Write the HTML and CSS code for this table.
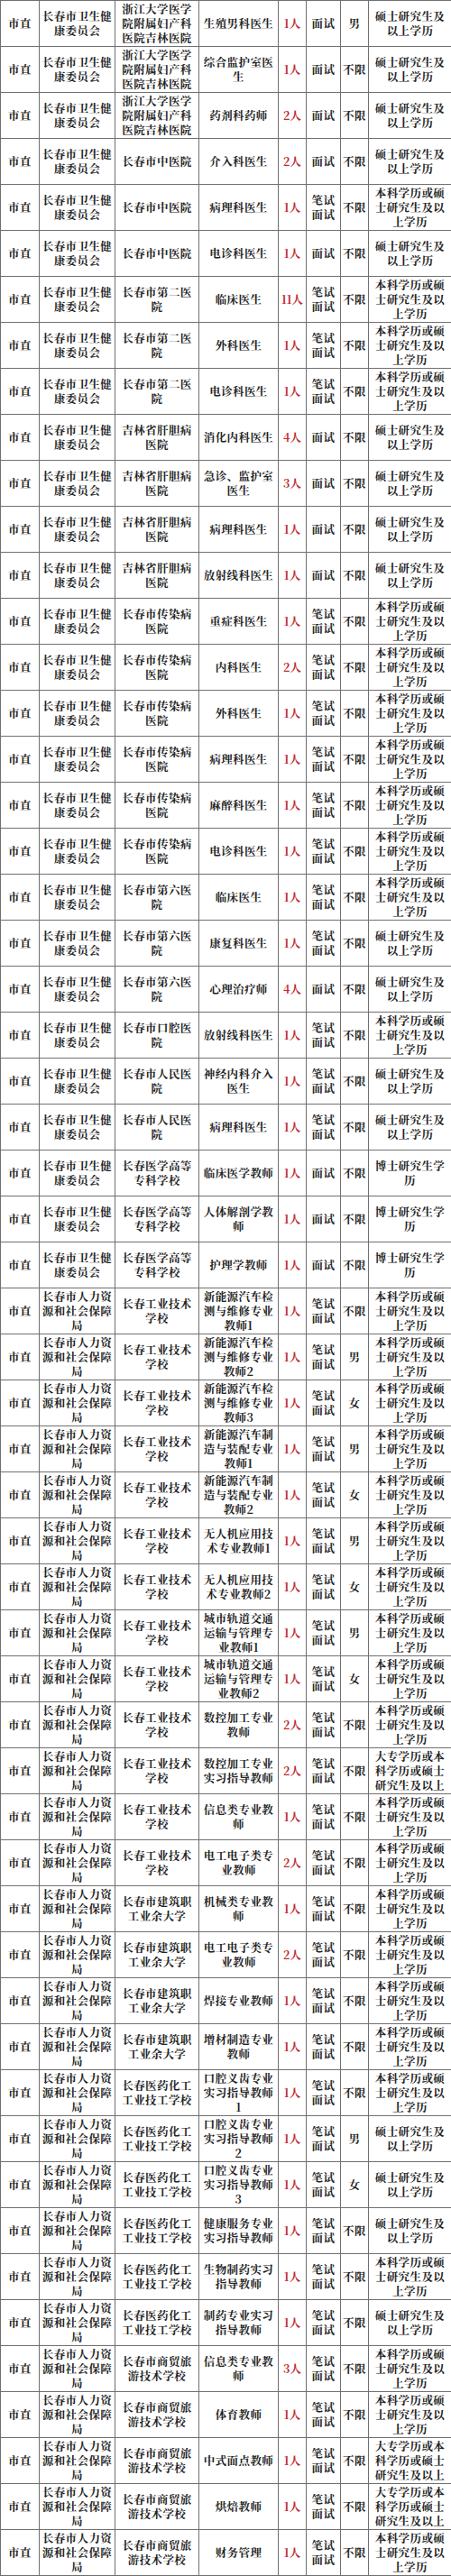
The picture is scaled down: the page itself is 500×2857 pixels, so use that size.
FILE: index.html
```html
<!DOCTYPE html>
<html lang="zh-CN">
<head>
<meta charset="utf-8">
<title>岗位表</title>
<link rel="stylesheet" href="styles.css">
</head>
<body>
<table class="sheet">
<colgroup>
<col class="c1"><col class="c2"><col class="c3"><col class="c4"><col class="c5"><col class="c6"><col class="c7"><col class="c8">
</colgroup>
<tbody>
<tr><td>市直</td><td>长春市卫生健<br>康委员会</td><td>浙江大学医学<br>院附属妇产科<br>医院吉林医院</td><td>生殖男科医生</td><td class="n">1人</td><td>面试</td><td>男</td><td>硕士研究生及<br>以上学历</td></tr>
<tr><td>市直</td><td>长春市卫生健<br>康委员会</td><td>浙江大学医学<br>院附属妇产科<br>医院吉林医院</td><td>综合监护室医<br>生</td><td class="n">1人</td><td>面试</td><td>不限</td><td>硕士研究生及<br>以上学历</td></tr>
<tr><td>市直</td><td>长春市卫生健<br>康委员会</td><td>浙江大学医学<br>院附属妇产科<br>医院吉林医院</td><td>药剂科药师</td><td class="n">2人</td><td>面试</td><td>不限</td><td>硕士研究生及<br>以上学历</td></tr>
<tr><td>市直</td><td>长春市卫生健<br>康委员会</td><td>长春市中医院</td><td>介入科医生</td><td class="n">2人</td><td>面试</td><td>不限</td><td>硕士研究生及<br>以上学历</td></tr>
<tr><td>市直</td><td>长春市卫生健<br>康委员会</td><td>长春市中医院</td><td>病理科医生</td><td class="n">1人</td><td>笔试<br>面试</td><td>不限</td><td>本科学历或硕<br>士研究生及以<br>上学历</td></tr>
<tr><td>市直</td><td>长春市卫生健<br>康委员会</td><td>长春市中医院</td><td>电诊科医生</td><td class="n">1人</td><td>面试</td><td>不限</td><td>硕士研究生及<br>以上学历</td></tr>
<tr><td>市直</td><td>长春市卫生健<br>康委员会</td><td>长春市第二医<br>院</td><td>临床医生</td><td class="n">11人</td><td>笔试<br>面试</td><td>不限</td><td>本科学历或硕<br>士研究生及以<br>上学历</td></tr>
<tr><td>市直</td><td>长春市卫生健<br>康委员会</td><td>长春市第二医<br>院</td><td>外科医生</td><td class="n">1人</td><td>笔试<br>面试</td><td>不限</td><td>本科学历或硕<br>士研究生及以<br>上学历</td></tr>
<tr><td>市直</td><td>长春市卫生健<br>康委员会</td><td>长春市第二医<br>院</td><td>电诊科医生</td><td class="n">1人</td><td>笔试<br>面试</td><td>不限</td><td>本科学历或硕<br>士研究生及以<br>上学历</td></tr>
<tr><td>市直</td><td>长春市卫生健<br>康委员会</td><td>吉林省肝胆病<br>医院</td><td>消化内科医生</td><td class="n">4人</td><td>面试</td><td>不限</td><td>硕士研究生及<br>以上学历</td></tr>
<tr><td>市直</td><td>长春市卫生健<br>康委员会</td><td>吉林省肝胆病<br>医院</td><td>急诊、监护室<br>医生</td><td class="n">3人</td><td>面试</td><td>不限</td><td>硕士研究生及<br>以上学历</td></tr>
<tr><td>市直</td><td>长春市卫生健<br>康委员会</td><td>吉林省肝胆病<br>医院</td><td>病理科医生</td><td class="n">1人</td><td>面试</td><td>不限</td><td>硕士研究生及<br>以上学历</td></tr>
<tr><td>市直</td><td>长春市卫生健<br>康委员会</td><td>吉林省肝胆病<br>医院</td><td>放射线科医生</td><td class="n">1人</td><td>面试</td><td>不限</td><td>硕士研究生及<br>以上学历</td></tr>
<tr><td>市直</td><td>长春市卫生健<br>康委员会</td><td>长春市传染病<br>医院</td><td>重症科医生</td><td class="n">1人</td><td>笔试<br>面试</td><td>不限</td><td>本科学历或硕<br>士研究生及以<br>上学历</td></tr>
<tr><td>市直</td><td>长春市卫生健<br>康委员会</td><td>长春市传染病<br>医院</td><td>内科医生</td><td class="n">2人</td><td>笔试<br>面试</td><td>不限</td><td>本科学历或硕<br>士研究生及以<br>上学历</td></tr>
<tr><td>市直</td><td>长春市卫生健<br>康委员会</td><td>长春市传染病<br>医院</td><td>外科医生</td><td class="n">1人</td><td>笔试<br>面试</td><td>不限</td><td>本科学历或硕<br>士研究生及以<br>上学历</td></tr>
<tr><td>市直</td><td>长春市卫生健<br>康委员会</td><td>长春市传染病<br>医院</td><td>病理科医生</td><td class="n">1人</td><td>笔试<br>面试</td><td>不限</td><td>本科学历或硕<br>士研究生及以<br>上学历</td></tr>
<tr><td>市直</td><td>长春市卫生健<br>康委员会</td><td>长春市传染病<br>医院</td><td>麻醉科医生</td><td class="n">1人</td><td>笔试<br>面试</td><td>不限</td><td>本科学历或硕<br>士研究生及以<br>上学历</td></tr>
<tr><td>市直</td><td>长春市卫生健<br>康委员会</td><td>长春市传染病<br>医院</td><td>电诊科医生</td><td class="n">1人</td><td>笔试<br>面试</td><td>不限</td><td>本科学历或硕<br>士研究生及以<br>上学历</td></tr>
<tr><td>市直</td><td>长春市卫生健<br>康委员会</td><td>长春市第六医<br>院</td><td>临床医生</td><td class="n">1人</td><td>笔试<br>面试</td><td>不限</td><td>本科学历或硕<br>士研究生及以<br>上学历</td></tr>
<tr><td>市直</td><td>长春市卫生健<br>康委员会</td><td>长春市第六医<br>院</td><td>康复科医生</td><td class="n">1人</td><td>笔试<br>面试</td><td>不限</td><td>硕士研究生及<br>以上学历</td></tr>
<tr><td>市直</td><td>长春市卫生健<br>康委员会</td><td>长春市第六医<br>院</td><td>心理治疗师</td><td class="n">4人</td><td>面试</td><td>不限</td><td>硕士研究生及<br>以上学历</td></tr>
<tr><td>市直</td><td>长春市卫生健<br>康委员会</td><td>长春市口腔医<br>院</td><td>放射线科医生</td><td class="n">1人</td><td>笔试<br>面试</td><td>不限</td><td>本科学历或硕<br>士研究生及以<br>上学历</td></tr>
<tr><td>市直</td><td>长春市卫生健<br>康委员会</td><td>长春市人民医<br>院</td><td>神经内科介入<br>医生</td><td class="n">1人</td><td>笔试<br>面试</td><td>不限</td><td>硕士研究生及<br>以上学历</td></tr>
<tr><td>市直</td><td>长春市卫生健<br>康委员会</td><td>长春市人民医<br>院</td><td>病理科医生</td><td class="n">1人</td><td>笔试<br>面试</td><td>不限</td><td>硕士研究生及<br>以上学历</td></tr>
<tr><td>市直</td><td>长春市卫生健<br>康委员会</td><td>长春医学高等<br>专科学校</td><td>临床医学教师</td><td class="n">1人</td><td>面试</td><td>不限</td><td>博士研究生学<br>历</td></tr>
<tr><td>市直</td><td>长春市卫生健<br>康委员会</td><td>长春医学高等<br>专科学校</td><td>人体解剖学教<br>师</td><td class="n">1人</td><td>面试</td><td>不限</td><td>博士研究生学<br>历</td></tr>
<tr><td>市直</td><td>长春市卫生健<br>康委员会</td><td>长春医学高等<br>专科学校</td><td>护理学教师</td><td class="n">1人</td><td>面试</td><td>不限</td><td>博士研究生学<br>历</td></tr>
<tr><td>市直</td><td>长春市人力资<br>源和社会保障<br>局</td><td>长春工业技术<br>学校</td><td>新能源汽车检<br>测与维修专业<br>教师1</td><td class="n">1人</td><td>笔试<br>面试</td><td>不限</td><td>本科学历或硕<br>士研究生及以<br>上学历</td></tr>
<tr><td>市直</td><td>长春市人力资<br>源和社会保障<br>局</td><td>长春工业技术<br>学校</td><td>新能源汽车检<br>测与维修专业<br>教师2</td><td class="n">1人</td><td>笔试<br>面试</td><td>男</td><td>本科学历或硕<br>士研究生及以<br>上学历</td></tr>
<tr><td>市直</td><td>长春市人力资<br>源和社会保障<br>局</td><td>长春工业技术<br>学校</td><td>新能源汽车检<br>测与维修专业<br>教师3</td><td class="n">1人</td><td>笔试<br>面试</td><td>女</td><td>本科学历或硕<br>士研究生及以<br>上学历</td></tr>
<tr><td>市直</td><td>长春市人力资<br>源和社会保障<br>局</td><td>长春工业技术<br>学校</td><td>新能源汽车制<br>造与装配专业<br>教师1</td><td class="n">1人</td><td>笔试<br>面试</td><td>男</td><td>本科学历或硕<br>士研究生及以<br>上学历</td></tr>
<tr><td>市直</td><td>长春市人力资<br>源和社会保障<br>局</td><td>长春工业技术<br>学校</td><td>新能源汽车制<br>造与装配专业<br>教师2</td><td class="n">1人</td><td>笔试<br>面试</td><td>女</td><td>本科学历或硕<br>士研究生及以<br>上学历</td></tr>
<tr><td>市直</td><td>长春市人力资<br>源和社会保障<br>局</td><td>长春工业技术<br>学校</td><td>无人机应用技<br>术专业教师1</td><td class="n">1人</td><td>笔试<br>面试</td><td>男</td><td>本科学历或硕<br>士研究生及以<br>上学历</td></tr>
<tr><td>市直</td><td>长春市人力资<br>源和社会保障<br>局</td><td>长春工业技术<br>学校</td><td>无人机应用技<br>术专业教师2</td><td class="n">1人</td><td>笔试<br>面试</td><td>女</td><td>本科学历或硕<br>士研究生及以<br>上学历</td></tr>
<tr><td>市直</td><td>长春市人力资<br>源和社会保障<br>局</td><td>长春工业技术<br>学校</td><td>城市轨道交通<br>运输与管理专<br>业教师1</td><td class="n">1人</td><td>笔试<br>面试</td><td>男</td><td>本科学历或硕<br>士研究生及以<br>上学历</td></tr>
<tr><td>市直</td><td>长春市人力资<br>源和社会保障<br>局</td><td>长春工业技术<br>学校</td><td>城市轨道交通<br>运输与管理专<br>业教师2</td><td class="n">1人</td><td>笔试<br>面试</td><td>女</td><td>本科学历或硕<br>士研究生及以<br>上学历</td></tr>
<tr><td>市直</td><td>长春市人力资<br>源和社会保障<br>局</td><td>长春工业技术<br>学校</td><td>数控加工专业<br>教师</td><td class="n">2人</td><td>笔试<br>面试</td><td>不限</td><td>本科学历或硕<br>士研究生及以<br>上学历</td></tr>
<tr><td>市直</td><td>长春市人力资<br>源和社会保障<br>局</td><td>长春工业技术<br>学校</td><td>数控加工专业<br>实习指导教师</td><td class="n">2人</td><td>笔试<br>面试</td><td>不限</td><td>大专学历或本<br>科学历或硕士<br>研究生及以上</td></tr>
<tr><td>市直</td><td>长春市人力资<br>源和社会保障<br>局</td><td>长春工业技术<br>学校</td><td>信息类专业教<br>师</td><td class="n">1人</td><td>笔试<br>面试</td><td>不限</td><td>本科学历或硕<br>士研究生及以<br>上学历</td></tr>
<tr><td>市直</td><td>长春市人力资<br>源和社会保障<br>局</td><td>长春工业技术<br>学校</td><td>电工电子类专<br>业教师</td><td class="n">2人</td><td>笔试<br>面试</td><td>不限</td><td>本科学历或硕<br>士研究生及以<br>上学历</td></tr>
<tr><td>市直</td><td>长春市人力资<br>源和社会保障<br>局</td><td>长春市建筑职<br>工业余大学</td><td>机械类专业教<br>师</td><td class="n">1人</td><td>笔试<br>面试</td><td>不限</td><td>本科学历或硕<br>士研究生及以<br>上学历</td></tr>
<tr><td>市直</td><td>长春市人力资<br>源和社会保障<br>局</td><td>长春市建筑职<br>工业余大学</td><td>电工电子类专<br>业教师</td><td class="n">2人</td><td>笔试<br>面试</td><td>不限</td><td>本科学历或硕<br>士研究生及以<br>上学历</td></tr>
<tr><td>市直</td><td>长春市人力资<br>源和社会保障<br>局</td><td>长春市建筑职<br>工业余大学</td><td>焊接专业教师</td><td class="n">1人</td><td>笔试<br>面试</td><td>不限</td><td>本科学历或硕<br>士研究生及以<br>上学历</td></tr>
<tr><td>市直</td><td>长春市人力资<br>源和社会保障<br>局</td><td>长春市建筑职<br>工业余大学</td><td>增材制造专业<br>教师</td><td class="n">1人</td><td>笔试<br>面试</td><td>不限</td><td>本科学历或硕<br>士研究生及以<br>上学历</td></tr>
<tr><td>市直</td><td>长春市人力资<br>源和社会保障<br>局</td><td>长春医药化工<br>工业技工学校</td><td>口腔义齿专业<br>实习指导教师<br>1</td><td class="n">1人</td><td>笔试<br>面试</td><td>不限</td><td>本科学历或硕<br>士研究生及以<br>上学历</td></tr>
<tr><td>市直</td><td>长春市人力资<br>源和社会保障<br>局</td><td>长春医药化工<br>工业技工学校</td><td>口腔义齿专业<br>实习指导教师<br>2</td><td class="n">1人</td><td>笔试<br>面试</td><td>男</td><td>硕士研究生及<br>以上学历</td></tr>
<tr><td>市直</td><td>长春市人力资<br>源和社会保障<br>局</td><td>长春医药化工<br>工业技工学校</td><td>口腔义齿专业<br>实习指导教师<br>3</td><td class="n">1人</td><td>笔试<br>面试</td><td>女</td><td>硕士研究生及<br>以上学历</td></tr>
<tr><td>市直</td><td>长春市人力资<br>源和社会保障<br>局</td><td>长春医药化工<br>工业技工学校</td><td>健康服务专业<br>实习指导教师</td><td class="n">1人</td><td>笔试<br>面试</td><td>不限</td><td>硕士研究生及<br>以上学历</td></tr>
<tr><td>市直</td><td>长春市人力资<br>源和社会保障<br>局</td><td>长春医药化工<br>工业技工学校</td><td>生物制药实习<br>指导教师</td><td class="n">1人</td><td>笔试<br>面试</td><td>不限</td><td>本科学历或硕<br>士研究生及以<br>上学历</td></tr>
<tr><td>市直</td><td>长春市人力资<br>源和社会保障<br>局</td><td>长春医药化工<br>工业技工学校</td><td>制药专业实习<br>指导教师</td><td class="n">1人</td><td>笔试<br>面试</td><td>不限</td><td>硕士研究生及<br>以上学历</td></tr>
<tr><td>市直</td><td>长春市人力资<br>源和社会保障<br>局</td><td>长春市商贸旅<br>游技术学校</td><td>信息类专业教<br>师</td><td class="n">3人</td><td>笔试<br>面试</td><td>不限</td><td>本科学历或硕<br>士研究生及以<br>上学历</td></tr>
<tr><td>市直</td><td>长春市人力资<br>源和社会保障<br>局</td><td>长春市商贸旅<br>游技术学校</td><td>体育教师</td><td class="n">1人</td><td>笔试<br>面试</td><td>不限</td><td>本科学历或硕<br>士研究生及以<br>上学历</td></tr>
<tr><td>市直</td><td>长春市人力资<br>源和社会保障<br>局</td><td>长春市商贸旅<br>游技术学校</td><td>中式面点教师</td><td class="n">1人</td><td>笔试<br>面试</td><td>不限</td><td>大专学历或本<br>科学历或硕士<br>研究生及以上</td></tr>
<tr><td>市直</td><td>长春市人力资<br>源和社会保障<br>局</td><td>长春市商贸旅<br>游技术学校</td><td>烘焙教师</td><td class="n">1人</td><td>笔试<br>面试</td><td>不限</td><td>大专学历或本<br>科学历或硕士<br>研究生及以上</td></tr>
<tr><td>市直</td><td>长春市人力资<br>源和社会保障<br>局</td><td>长春市商贸旅<br>游技术学校</td><td>财务管理</td><td class="n">1人</td><td>笔试<br>面试</td><td>不限</td><td>本科学历或硕<br>士研究生及以<br>上学历</td></tr>
</tbody>
</table>
</body>
</html>
```

FILE: styles.css
```css
html, body {
  margin: 0;
  padding: 0;
  background: #ffffff;
}

.sheet {
  width: 500px;
  border-collapse: collapse;
  table-layout: fixed;
  font-family: "Noto Serif CJK SC", "Noto Sans CJK SC", serif;
  font-size: 12.5px;
  line-height: 16px;
  letter-spacing: 0.4px;
  font-weight: 700;
  color: #222222;
}

.c1 { width: 43px; }
.c2 { width: 84px; }
.c3 { width: 93px; }
.c4 { width: 88px; }
.c5 { width: 31px; }
.c6 { width: 38px; }
.c7 { width: 31px; }
.c8 { width: 92px; }

.sheet tr {
  height: 51px;
}

.sheet td {
  border: 1px solid #707070;
  height: 50px;
  padding: 0;
  text-align: center;
  vertical-align: middle;
  white-space: nowrap;
  overflow: hidden;
}

.sheet .n {
  color: #c0282d;
  letter-spacing: 0;
}
```
